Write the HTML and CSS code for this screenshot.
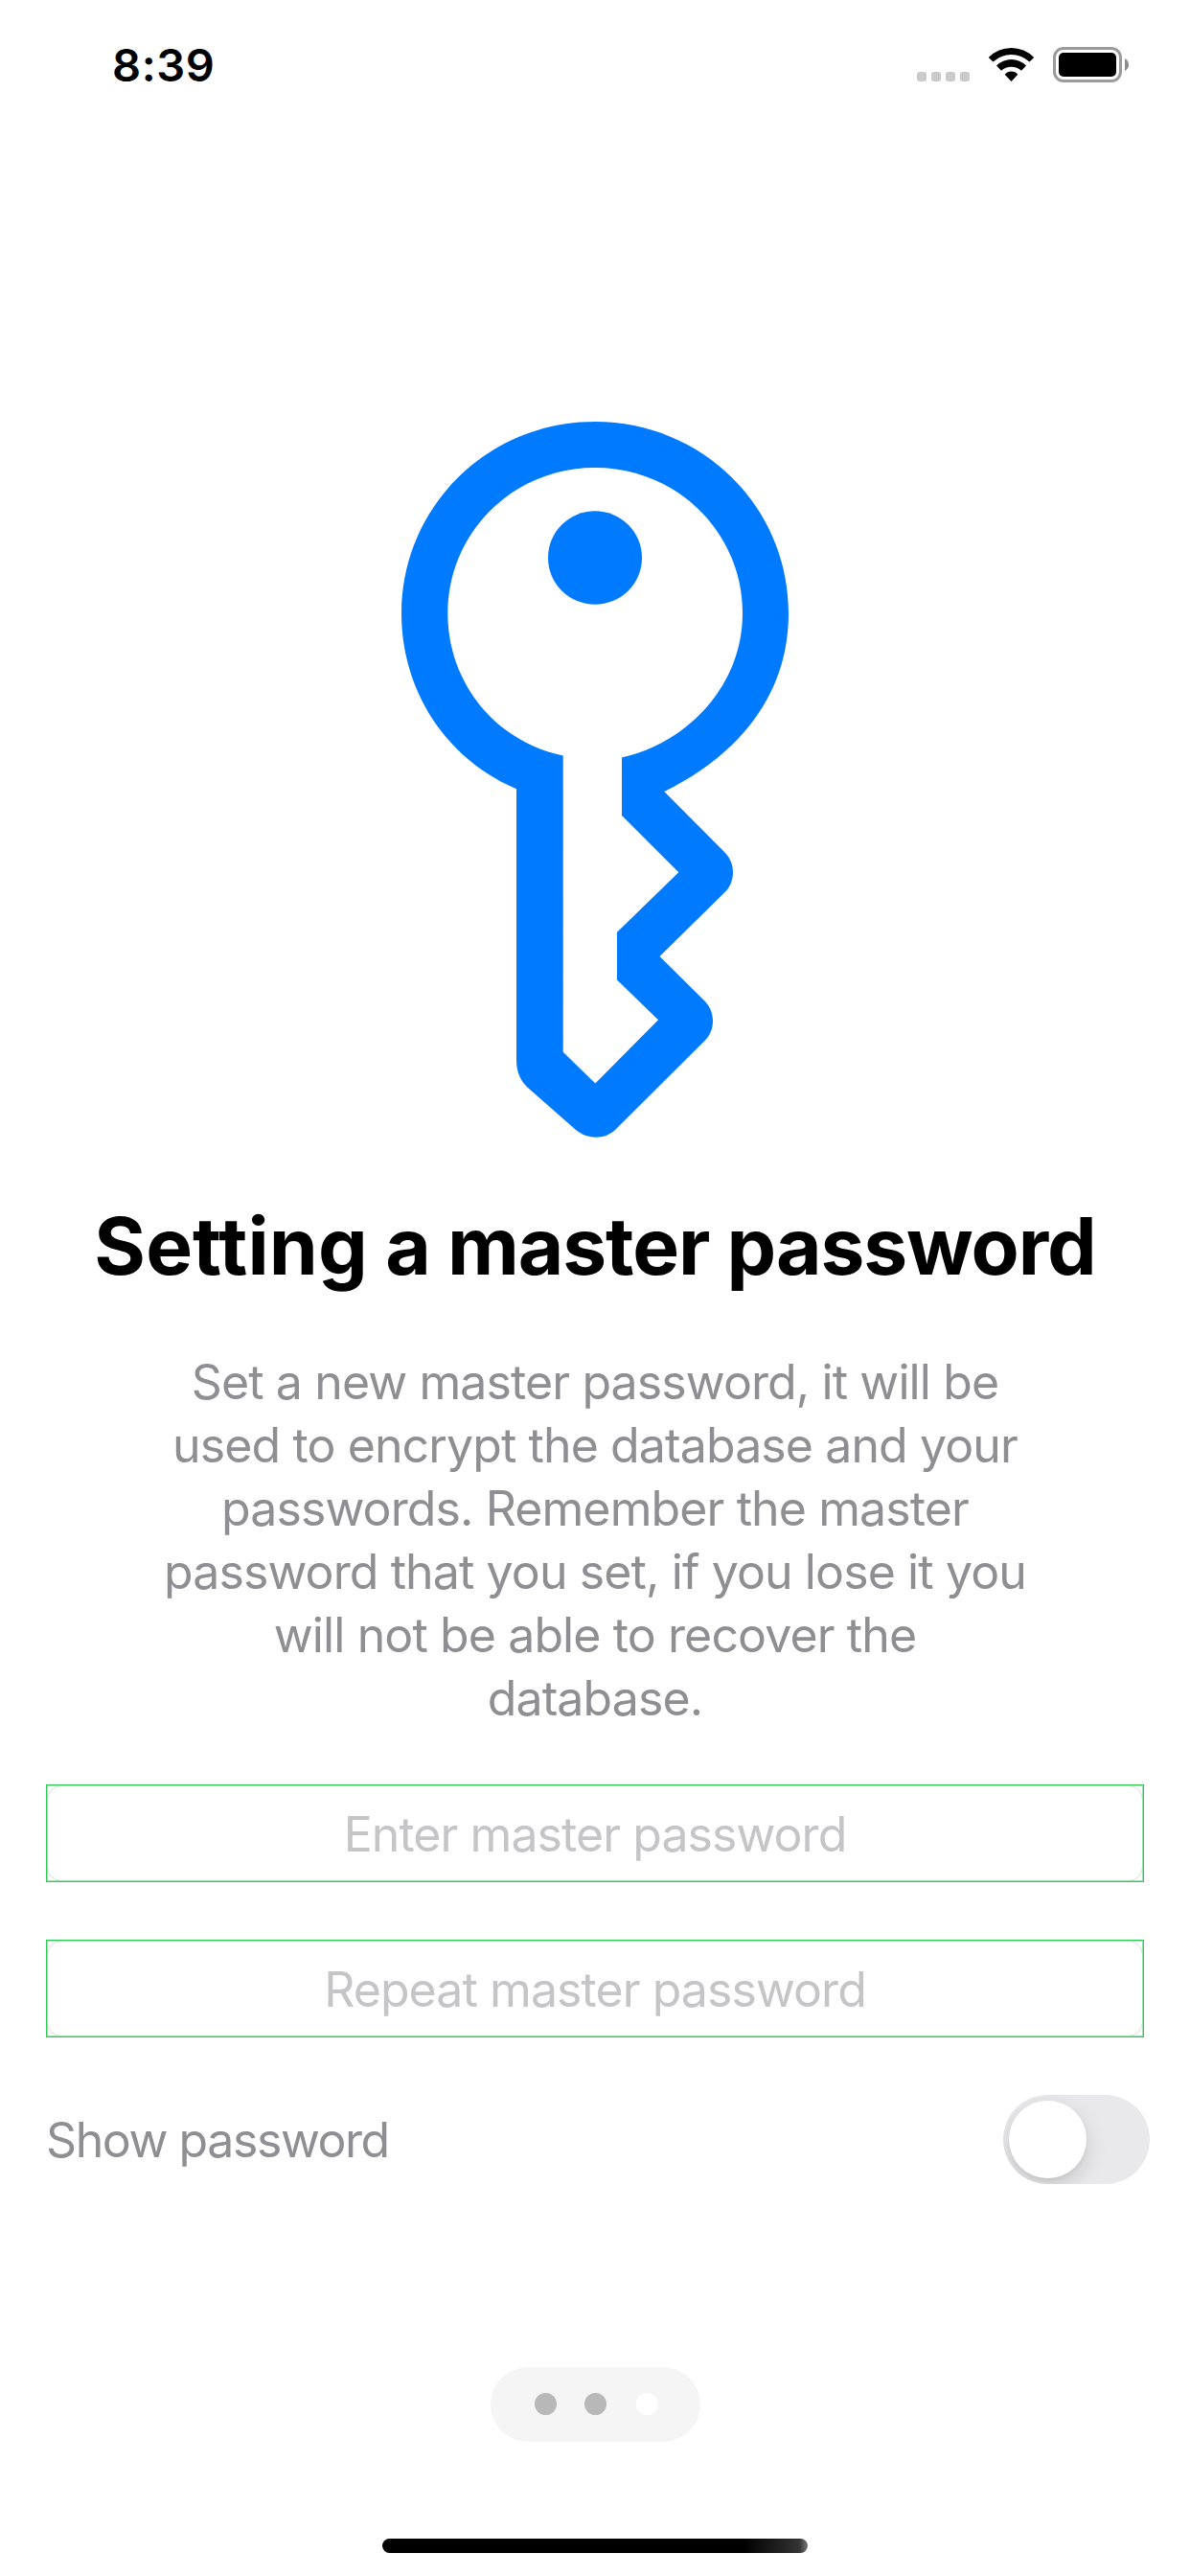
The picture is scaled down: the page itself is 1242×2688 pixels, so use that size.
FILE: index.html
```html
<!DOCTYPE html>
<html lang="en">
<head>
<meta charset="utf-8">
<title>Setting a master password</title>
<link rel="stylesheet" href="styles.css">
</head>
<body>
<div class="screen">
  <header class="status-bar">
    <span class="time">8:39</span>
    <svg class="status-icons" viewBox="957 49 221 37" aria-hidden="true">
      <g fill="#cacaca">
        <rect x="957" y="75" width="10" height="10" rx="3"/>
        <rect x="972" y="75" width="10" height="10" rx="3"/>
        <rect x="987" y="75" width="10" height="10" rx="3"/>
        <rect x="1002" y="75" width="10" height="10" rx="3"/>
      </g>
      <path d="M1031.8 60A33 33 0 0 1 1079.2 60L1074.5 64.6A27.3 27.3 0 0 0 1036.5 64.6Z"/>
      <path d="M1040 68.5A22 22 0 0 1 1071 68.5L1066 73.8A15.8 15.8 0 0 0 1045 73.8Z"/>
      <path d="M1048.7 77.7A9 9 0 0 1 1062.3 77.7L1055.5 85Z"/>
      <rect x="1100.5" y="50.5" width="69" height="34" rx="9.5" fill="none" stroke="#9b9b9b" stroke-width="3"/>
      <rect x="1105" y="55" width="60" height="25" rx="5"/>
      <path d="M1174 61Q1178 63.500 1178 67.500Q1178 71.500 1174 74Z" fill="#8c8c8c"/>
    </svg>
  </header>

  <main class="content">
    <svg class="key" viewBox="419 440 404 747" aria-hidden="true">
      <path fill-rule="evenodd" d="M539 823.300C467 793 419 722 419 640C419 529 509 440 621 440C733 440 823 529 823 640C823 728 768 789 693.300 826L756 889C761 894 765 901 765 910.500C765 919 761.500 926 756.500 931L688.500 998L735 1044C740 1049 744 1056 744 1065.500C744 1074 740.500 1081 735.500 1086L642 1179C636 1184.500 629.500 1186.700 622 1186.700C614.500 1186.700 607 1184 601 1179L551.500 1135.500C543 1128 539 1118 539 1106.500ZM587.700 788.500V1097.700L621.300 1130.500L687 1064.300L644 1022.500V972.700L708.300 910.300L649 851V790.500C721 774 775 713 775 640C775 555 706 488 621 488C536 488 467.300 555 467.300 640C467.300 712 517 774 587.700 788.500Z"/>
      <ellipse cx="621" cy="582" rx="49" ry="48.700"/>
    </svg>
    <h1 class="title"><span class="title-lead">Setting</span> a master password</h1>
    <p class="description">Set a new master password, it will be<br>used to encrypt the database and your<br>passwords. Remember the master<br>password that you set, if you lose it you<br>will not be able to recover the<br>database.</p>
    <div class="form">
      <div class="field"><span>Enter master password</span></div>
      <div class="field"><span>Repeat master password</span></div>
      <div class="switch-row">
        <span class="switch-label">Show password</span>
        <div class="switch"><div class="knob"></div></div>
      </div>
    </div>
  </main>

  <nav class="pager">
    <i class="dot"></i>
    <i class="dot"></i>
    <i class="dot current"></i>
  </nav>
  <div class="home-indicator"></div>
</div>
</body>
</html>
```
FILE: styles.css
```css
* {
  box-sizing: border-box;
}

body {
  margin: 0;
  background: #fff;
  font-family: Inter, "Liberation Sans", sans-serif;
}

.screen {
  width: 1242px;
  height: 2688px;
  display: flex;
  flex-direction: column;
  align-items: center;
  overflow: hidden;
}

.status-bar {
  width: 100%;
  height: 135px;
  padding: 0 64px 0 117px;
  display: flex;
  align-items: center;
  justify-content: space-between;
}

.time {
  font-size: 47px;
  font-weight: 600;
  line-height: 48px;
  letter-spacing: 0.6px;
}

.status-icons {
  width: 221px;
  height: 37px;
}

.content {
  width: 100%;
  padding-top: 305px;
  display: flex;
  flex-direction: column;
  align-items: center;
}

.key {
  width: 404px;
  height: 747px;
  fill: #007aff;
}

.title {
  margin: 64px 0 58px;
  font-size: 82px;
  font-weight: 700;
  line-height: 100px;
  letter-spacing: -1.1px;
  white-space: nowrap;
  color: #000;
}

.title-lead {
  letter-spacing: 0.1px;
}

.description {
  margin: 0 0 57px;
  font-size: 50px;
  line-height: 66px;
  letter-spacing: -0.89px;
  text-align: center;
  white-space: nowrap;
  color: #8e8e93;
}

.form {
  width: 100%;
  padding: 0 42px 0 48px;
  display: flex;
  flex-direction: column;
  gap: 60px;
}

.field {
  position: relative;
  width: 1146px;
  height: 102px;
  padding-top: 1px;
  border: 1px solid #34c759;
  display: flex;
  align-items: center;
  justify-content: center;
  font-size: 50px;
  letter-spacing: -0.93px;
  color: #c5c5c7;
}

/* rounded inner outline, visible at the corners */
.field::before {
  content: "";
  position: absolute;
  inset: 0;
  border: 1px solid #dcdcdc;
  border-radius: 15px;
}

/* soft inner edge of the green frame */
.field::after {
  content: "";
  position: absolute;
  inset: 0;
  border: 1px solid #99e3ac;
}

.switch-row {
  display: flex;
  align-items: center;
  justify-content: space-between;
}

.switch-label {
  font-size: 50px;
  letter-spacing: -1.42px;
  color: #8e8e93;
}

.switch {
  width: 153px;
  height: 93px;
  padding: 6px;
  border-radius: 47px;
  background: #e9e9eb;
  overflow: hidden;
}

.knob {
  width: 81px;
  height: 81px;
  border-radius: 50%;
  background: #fff;
  box-shadow: 0 8px 22px rgba(0, 0, 0, 0.15), 0 3px 3px rgba(0, 0, 0, 0.04);
}

.pager {
  width: 219px;
  height: 78px;
  margin-top: 191px;
  padding: 0 0 1px 46px;
  display: flex;
  align-items: center;
  gap: 29px;
  border-radius: 39px;
  background: #f5f5f5;
}

.dot {
  width: 23px;
  height: 23px;
  border-radius: 50%;
  background: #b8b8b8;
}

.dot.current {
  margin-left: 2px;
  background: #fff;
}

.home-indicator {
  width: 444px;
  height: 15px;
  margin-top: 101px;
  border-radius: 8px;
  background: linear-gradient(90deg, #000 85%, #333 98%, #777);
}
```
